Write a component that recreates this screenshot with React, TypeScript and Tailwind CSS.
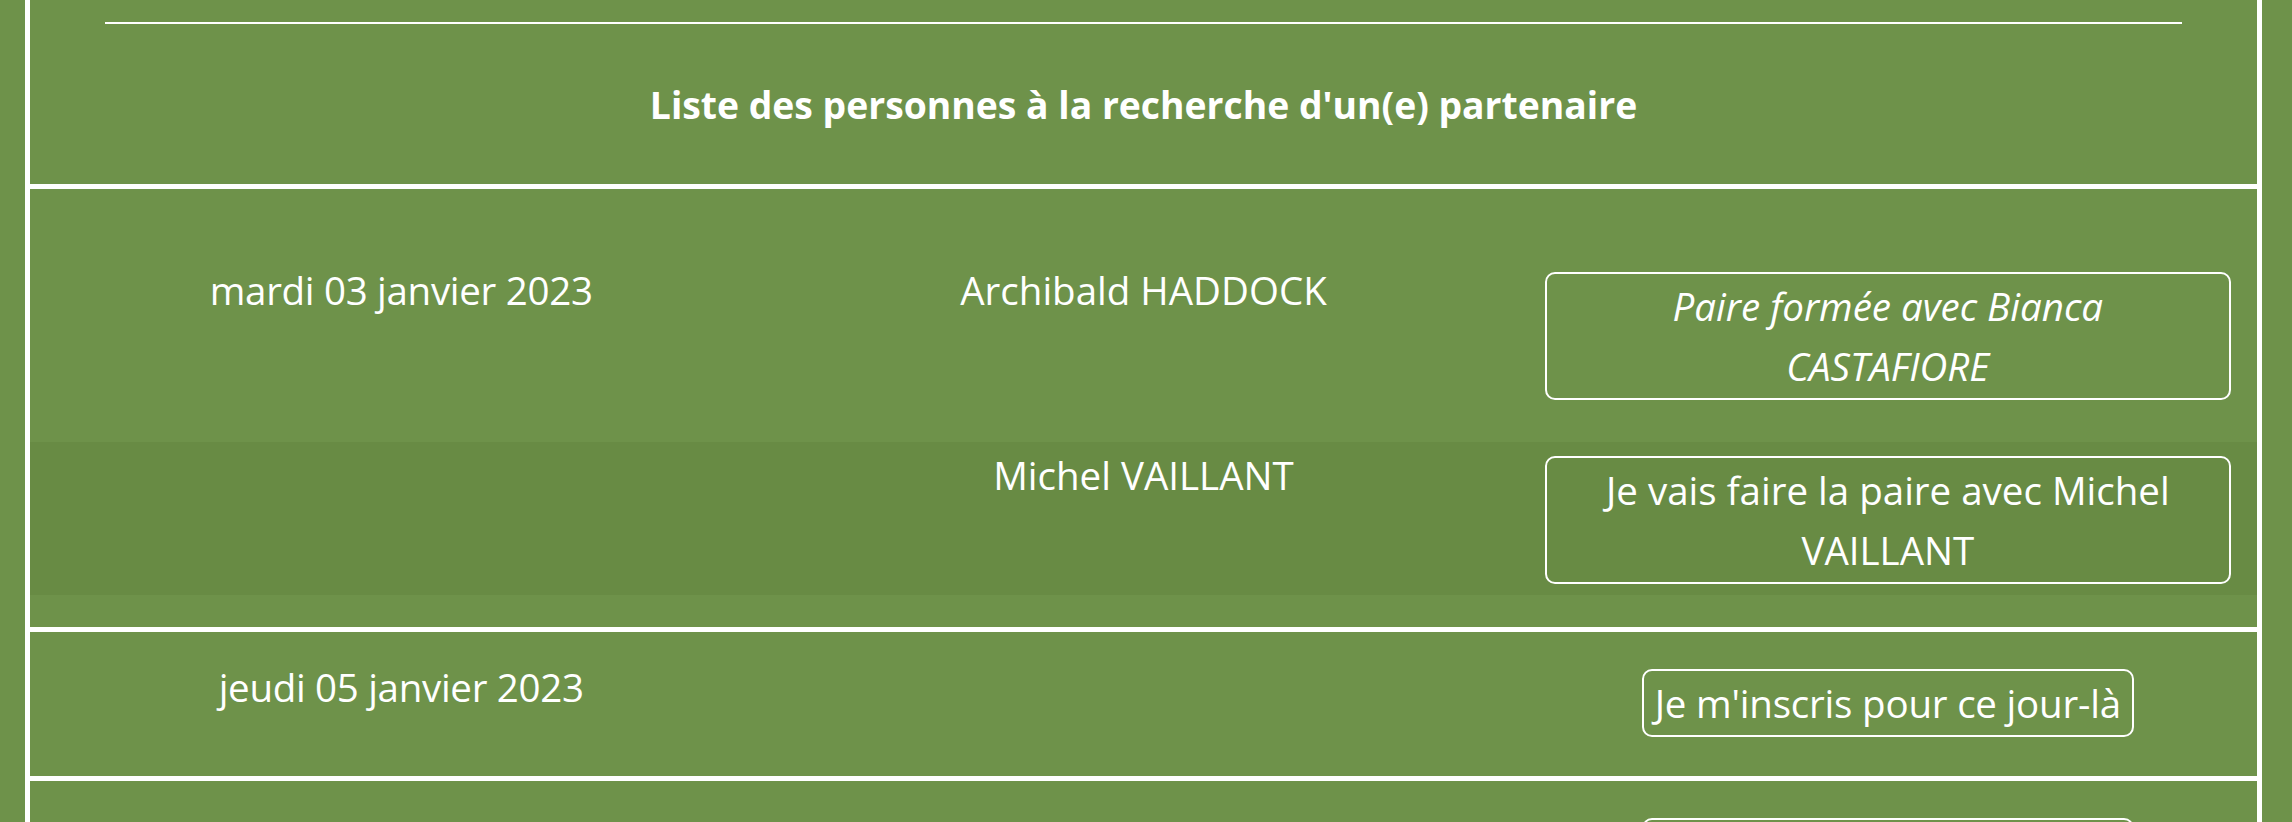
type Entry = {
  name: string;
  action: string;
  italic?: boolean;
};

type Day = {
  date: string;
  entries: Entry[];
};

const days: Day[] = [
  {
    date: "mardi 03 janvier 2023",
    entries: [
      { name: "Archibald HADDOCK", action: "Paire formée avec Bianca CASTAFIORE", italic: true },
      { name: "Michel VAILLANT", action: "Je vais faire la paire avec Michel VAILLANT" },
    ],
  },
  { date: "jeudi 05 janvier 2023", entries: [] },
  { date: "samedi 07 janvier 2023", entries: [] },
];

const font = { fontFamily: '"Open Sans", "Liberation Sans", sans-serif' };

function WideButton({ entry }: { entry: Entry }) {
  return (
    <div className="ml-[30px] mr-[26px]">
      <button
        className={`w-full rounded-[10px] border-2 border-white px-[30px] py-[2px] text-center leading-[60px] text-white ${
          entry.italic ? "italic" : ""
        }`}
      >
        {entry.action}
      </button>
    </div>
  );
}

function SignupButton() {
  return (
    <div className="ml-[30px] mr-[26px] flex justify-center">
      <button className="rounded-[10px] border-2 border-white px-[11px] py-[2px] leading-[60px] tracking-[-0.2px] text-white">
        Je m'inscris pour ce jour-là
      </button>
    </div>
  );
}

export default function App() {
  return (
    <div className="min-h-screen bg-[#6e924a] pl-[25px] pr-[30px] text-[38.5px] text-white" style={font}>
      <div className="border-x-[5px] border-white">
        {/* header */}
        <div className="h-[189px] border-b-[5px] border-white pt-[22px]">
          <hr className="mx-[75px] border-t-2 border-white" />
          <h2 className="mt-[51px] text-center text-[37.3px] font-bold leading-[60px]">
            Liste des personnes à la recherche d'un(e) partenaire
          </h2>
        </div>

        {days.map((day, i) =>
          day.entries.length > 0 ? (
            <div key={i} className="h-[443px] border-b-[5px] border-white pb-[32px]">
              {day.entries.map((entry, j) => (
                <div
                  key={j}
                  className={`grid grid-cols-3 items-start leading-[60px] ${
                    j === 0 ? "h-[253px]" : "h-[153px] bg-[#688b44]"
                  }`}
                >
                  <div className={`text-center tracking-[-0.3px] ${j === 0 ? "pt-[71px]" : "pt-[3px]"}`}>
                    {j === 0 ? day.date : ""}
                  </div>
                  <div className={`text-center ${j === 0 ? "pt-[71px]" : "pt-[3px]"}`}>
                    {entry.name}
                  </div>
                  <div className={j === 0 ? "pt-[83px]" : "pt-[14px]"}>
                    <WideButton entry={entry} />
                  </div>
                </div>
              ))}
            </div>
          ) : (
            <div
              key={i}
              className="grid h-[149px] grid-cols-3 items-start border-b-[5px] border-white leading-[60px]"
            >
              <div className="pt-[25px] text-center tracking-[-0.3px]">{day.date}</div>
              <div />
              <div className="pt-[37px]">
                <SignupButton />
              </div>
            </div>
          )
        )}
      </div>
    </div>
  );
}
